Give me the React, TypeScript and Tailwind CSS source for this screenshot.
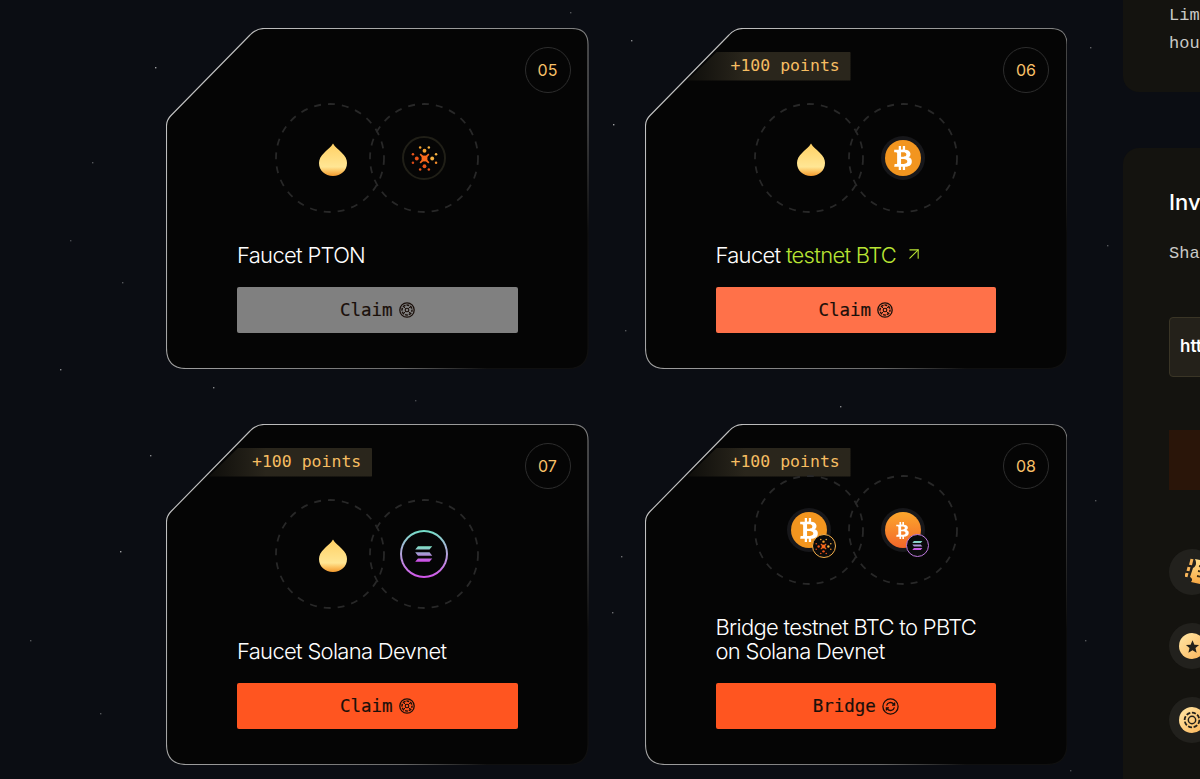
import { ArrowUpRight } from 'lucide-react'
import { FaBtc } from 'react-icons/fa'
import type { ReactNode } from 'react'

const mono = "font-['DejaVu_Sans_Mono',monospace]"
const plainMono = "font-['Liberation_Mono',monospace]"
const sans = "font-['Inter',sans-serif]"

// starfield dots: x, y, opacity
const stars = [
  [155, 67, 0.6], [631, 40, 0.5], [1090, 47, 0.35], [92, 162, 0.3], [613, 124, 0.6], [122, 282, 0.3],
  [60, 369, 0.5], [213, 387, 0.5], [840, 406, 0.5], [1107, 245, 0.3], [150, 455, 0.5], [120, 551, 0.6],
  [621, 556, 0.4], [100, 713, 0.3], [612, 612, 0.4], [30, 640, 0.3], [570, 12, 0.3], [1095, 500, 0.3],
  [70, 240, 0.25], [625, 330, 0.3], [1085, 640, 0.3], [415, 400, 0.25], [1070, 770, 0.25], [195, 128, 0.35],
  [193, 255, 0.3], [254, 581, 0.3], [428, 585, 0.3], [960, 200, 0.25], [1012, 192, 0.25], [565, 120, 0.3],
  [465, 355, 0.3], [884, 115, 0.25], [673, 130, 0.3], [905, 352, 0.25], [560, 550, 0.25], [800, 740, 0.2],
]

function Dot({ x, y, r, fill }: { x: number; y: number; r: number; fill: string }) {
  return <circle cx={x} cy={y} r={r} fill={fill} />
}

function Burst({ size }: { size: number }) {
  return (
    <svg width={size} height={size} viewBox="0 0 28 28">
      <rect x="11" y="11" width="6" height="6" fill="#ff6a1f" />
      <path d="M9.5 9.5l9 9M18.5 9.5l-9 9" stroke="#f96a1c" strokeWidth="1.7" />
      <Dot x={14} y={6} r={2} fill="#f5a12f" />
      <Dot x={14} y={22} r={2} fill="#e9541a" />
      <Dot x={6} y={14} r={2} fill="#e9541a" />
      <Dot x={22} y={14} r={2} fill="#f5b040" />
      <Dot x={9.5} y={2.5} r={1.3} fill="#f5a12f" />
      <Dot x={18.5} y={2.5} r={1.3} fill="#f5b040" />
      <Dot x={9.5} y={25.5} r={1.3} fill="#e9541a" />
      <Dot x={18.5} y={25.5} r={1.3} fill="#e9541a" />
      <Dot x={2} y={9.5} r={1.3} fill="#e9541a" />
      <Dot x={26} y={9.5} r={1.3} fill="#f5b040" />
      <Dot x={2} y={18.5} r={1.3} fill="#d94a18" />
      <Dot x={26} y={18.5} r={1.3} fill="#f08a2a" />
    </svg>
  )
}

function SolBars({ size, id }: { size: number; id: string }) {
  return (
    <svg width={size} height={size} viewBox="0 0 20 20">
      <defs>
        <linearGradient id={id} x1="0" y1="0" x2="0" y2="1">
          <stop offset="0" stopColor="#7fe3c4" />
          <stop offset="1" stopColor="#d04be8" />
        </linearGradient>
      </defs>
      <path d="M4.5 3h13l-2.5 3h-13zM2 8.5h13l2.5 3h-13zM4.5 14h13l-2.5 3h-13z" fill={`url(#${id})`} />
    </svg>
  )
}

function Drop() {
  return (
    <svg width="30" height="34" viewBox="0 0 30 34" className="ml-[5px] mt-[3px]">
      <defs>
        <linearGradient id="drop" x1="0" y1="0" x2="0" y2="1">
          <stop offset="0" stopColor="#ffd064" />
          <stop offset="0.72" stopColor="#ffe694" />
          <stop offset="0.84" stopColor="#fcc665" />
          <stop offset="1" stopColor="#f39a2e" />
        </linearGradient>
      </defs>
      <path d="M15 0.5 C17 4 20 6 23.5 9.5 C27.5 13 29 16.5 29 20 C29 27.5 23 33 15 33 C7 33 1 27.5 1 20 C1 16.5 2.5 13 6.5 9.5 C10 6 13 4 15 0.5Z" fill="url(#drop)" />
    </svg>
  )
}

function BtcCoin({ small, gradient }: { small?: boolean; gradient?: boolean }) {
  return (
    <div className="w-[44px] h-[44px] rounded-full bg-[#17171a] flex items-center justify-center">
      <div
        className={`w-[36px] h-[36px] rounded-full flex items-center justify-center ${gradient ? 'bg-gradient-to-b from-[#fba62c] to-[#f2662a]' : 'bg-[#f2951f]'}`}
      >
        <FaBtc className="text-white" size={small ? 17 : 24} />
      </div>
    </div>
  )
}

function ClaimIcon() {
  return (
    <svg width="16" height="16" viewBox="0 0 16 16" fill="none" stroke="#1a0f0a">
      <circle cx="8" cy="8" r="7.2" strokeWidth="1.3" />
      <circle cx="8" cy="8" r="5" strokeWidth="1.5" strokeDasharray="2.9 1" strokeDashoffset="1" />
      <circle cx="8" cy="8" r="1.8" strokeWidth="1.1" />
      <path d="M4.8 4.8l1.8 1.8M11.2 4.8l-1.8 1.8M4.8 11.2l1.8-1.8M11.2 11.2l-1.8-1.8" strokeWidth="1" />
    </svg>
  )
}

function BridgeIcon() {
  return (
    <svg width="17" height="17" viewBox="0 0 17 17" fill="none" stroke="#1a0f0a" strokeWidth="1.3">
      <circle cx="8.5" cy="8.5" r="7.6" />
      <path d="M4.6 7.6a4 4 0 0 1 7-1.6l.9 1M12.4 9.4a4 4 0 0 1-7 1.6l-.9-1" />
      <path d="M12.6 4.6v2.6H10M4.4 12.4V9.8H7" />
    </svg>
  )
}

function CardOutline({ id }: { id: string }) {
  const d =
    'M0.5 98 Q0.5 92 5 87.5 L84 7 Q90 0.5 98 0.5 H406 Q422 0.5 422 16.5 V320 Q422 340.5 402 340.5 H20 Q0.5 340.5 0.5 320 Z'
  return (
    <svg className="absolute inset-0" width="422.5" height="341" viewBox="0 0 422.5 341" fill="none">
      <defs>
        <linearGradient id={id} x1="0" y1="0" x2="1" y2="0.6">
          <stop offset="0" stopColor="#cfcfcf" />
          <stop offset="0.55" stopColor="#959595" />
          <stop offset="0.85" stopColor="#6b6b6b" />
          <stop offset="1" stopColor="#101010" />
        </linearGradient>
      </defs>
      <path d={d} fill="#050505" stroke={`url(#${id})`} strokeWidth="1.1" />
    </svg>
  )
}

function Rings({ children }: { children: ReactNode }) {
  return <div className="flex justify-center relative">{children}</div>
}

function Ring({ children, overlap }: { children: ReactNode; overlap?: boolean }) {
  return (
    <div className={`relative w-[110px] h-[110px] flex items-center justify-center ${overlap ? '-ml-[16px]' : ''}`}>
      <svg className="absolute inset-0" width="110" height="110" fill="none">
        <circle cx="55" cy="55" r="54" stroke="#282828" strokeWidth="1.8" strokeDasharray="7 7" />
      </svg>
      <div className="relative">{children}</div>
    </div>
  )
}

function Card({
  id,
  num,
  points,
  rings,
  title,
  button,
}: {
  id: string
  num: string
  points?: boolean
  rings: ReactNode
  title: ReactNode
  button: ReactNode
}) {
  return (
    <div className="relative w-[422.5px] h-[341px] flex flex-col items-center justify-end pb-[36px]">
      <CardOutline id={id} />
      {points && (
        <div
          className={`absolute left-[43px] top-[24px] w-[163px] h-[28.5px] pl-[43px] rounded-r-[1px] bg-gradient-to-r from-[#0f0e0b] to-[#2a261c] to-35% [clip-path:polygon(29px_0,100%_0,100%_100%,0_100%)] flex items-center text-[#f6bd62] text-[16.5px] whitespace-nowrap ${mono}`}
        >
          +100 points
        </div>
      )}
      <div
        className={`absolute top-[19px] right-[18px] w-[46px] h-[46px] rounded-full border border-[#2d2d2d] flex items-center justify-center text-[16px] text-[#f8c068] ${sans}`}
      >
        {num}
      </div>
      <div className="relative w-[280.5px] flex flex-col">
        <div className="-mx-[71px] mb-[30px]">
          <Rings>{rings}</Rings>
        </div>
        <div className={`text-[22px] leading-[24px] font-light tracking-[-0.7px] text-white mb-[20px] ${sans}`}>
          {title}
        </div>
        {button}
      </div>
    </div>
  )
}

function ActionButton({ label, color, icon }: { label: string; color: string; icon: ReactNode }) {
  return (
    <div
      className={`h-[46px] rounded-[2px] flex items-center justify-center gap-[6px] text-[17.5px] text-[#1a0f0a] [-webkit-text-stroke:0.2px_#1a0f0a] ${mono} ${color}`}
    >
      <span className="pt-[1px]">{label}</span>
      {icon}
    </div>
  )
}

function SideIcon({ children }: { children: ReactNode }) {
  return (
    <div className="w-[46px] h-[46px] rounded-full bg-[#22211d] flex items-center justify-center shrink-0">
      {children}
    </div>
  )
}

export default function App() {
  return (
    <div className="relative h-[779px] w-[1200px] overflow-hidden bg-[#0b0d13]">
      <svg className="absolute inset-0" width="1200" height="779">
        {stars.map(([x, y, o], i) => (
          <rect key={i} x={x} y={y} width="1.4" height="1.4" fill="#fff" opacity={o} />
        ))}
      </svg>

      <div className="relative flex pl-[166px] h-full">
        <div className="grid grid-cols-[422.5px_422.5px] gap-x-[56px] gap-y-[55px] pt-[28px] content-start shrink-0">
          <Card
            id="c5"
            num="05"
            rings={
              <>
                <Ring>
                  <Drop />
                </Ring>
                <Ring overlap>
                  <div className="w-[44px] h-[44px] rounded-full border-2 border-[#201f17] flex items-center justify-center">
                    <Burst size={27} />
                  </div>
                </Ring>
              </>
            }
            title="Faucet PTON"
            button={<ActionButton label="Claim" color="bg-[#808080]" icon={<ClaimIcon />} />}
          />
          <Card
            id="c6"
            num="06"
            points
            rings={
              <>
                <Ring>
                  <Drop />
                </Ring>
                <Ring overlap>
                  <BtcCoin />
                </Ring>
              </>
            }
            title={
              <span className="flex items-center">
                Faucet&nbsp;<span className="text-[#b9e434]">testnet BTC</span>
                <ArrowUpRight className="ml-[8px] -mt-[2px] text-[#b9e434]" size={20} strokeWidth={1.3} />
              </span>
            }
            button={<ActionButton label="Claim" color="bg-[#ff7149]" icon={<ClaimIcon />} />}
          />
          <Card
            id="c7"
            num="07"
            points
            rings={
              <>
                <Ring>
                  <Drop />
                </Ring>
                <Ring overlap>
                  <div className="w-[48px] h-[48px] rounded-full bg-gradient-to-b from-[#6fe0c8] to-[#d150ea] p-[2px]">
                    <div className="w-full h-full rounded-full bg-[#050506] flex items-center justify-center">
                      <SolBars size={22} id="sol-lg" />
                    </div>
                  </div>
                </Ring>
              </>
            }
            title="Faucet Solana Devnet"
            button={<ActionButton label="Claim" color="bg-[#ff5520]" icon={<ClaimIcon />} />}
          />
          <Card
            id="c8"
            num="08"
            points
            rings={
              <>
                <Ring>
                  <div className="relative">
                    <BtcCoin />
                    <div className="absolute left-[25px] top-[26px] w-[24px] h-[24px] rounded-full border border-[#f6b04a] bg-[#0a0a0b] flex items-center justify-center">
                      <Burst size={17} />
                    </div>
                  </div>
                </Ring>
                <Ring overlap>
                  <div className="relative">
                    <BtcCoin small gradient />
                    <div className="absolute left-[25px] top-[26px] w-[23px] h-[23px] rounded-full border border-[#c07be0] bg-[#0a0a0b] flex items-center justify-center">
                      <SolBars size={13} id="sol-sm" />
                    </div>
                  </div>
                </Ring>
              </>
            }
            title={
              <>
                Bridge testnet BTC to PBTC
                <br />
                on Solana Devnet
              </>
            }
            button={<ActionButton label="Bridge" color="bg-[#ff5520]" icon={<BridgeIcon />} />}
          />
        </div>

        <div className="ml-[56px] w-[400px] shrink-0 flex flex-col gap-[56px] h-full">
          <div
            className={`h-[92px] rounded-b-[16px] bg-[#14130f] pl-[46px] text-[17px] leading-[28px] text-[#c9c9c6] whitespace-nowrap ${plainMono}`}
          >
            <div className="pt-[2px]">Limit</div>
            <div>hours</div>
          </div>
          <div className="flex-1 rounded-t-[16px] bg-[#14130f] pl-[46px] pt-[40px]">
            <div className={`text-[22px] leading-[28px] font-medium text-white ${sans}`}>Invite</div>
            <div className={`mt-[26px] text-[17px] leading-[24px] text-[#c9c9c6] ${plainMono}`}>Share</div>
            <div
              className={`mt-[51px] h-[60px] rounded-[4px] border border-[#3a3526] bg-[#24211a] pl-[10px] flex items-center text-[17px] font-semibold text-white ${sans}`}
            >
              https://
            </div>
            <div className="mt-[53px] h-[60px] bg-[#2a1509]" />
            <div className="mt-[59px] flex flex-col gap-[28px]">
              <SideIcon>
                <svg width="30" height="30" viewBox="0 0 30 30" className="ml-[16px]">
                  <defs>
                    <linearGradient id="t" x1="0" y1="0" x2="0" y2="1">
                      <stop offset="0" stopColor="#ffdf8e" />
                      <stop offset="1" stopColor="#f8a33c" />
                    </linearGradient>
                  </defs>
                  <path d="M10 2l19 4-5 23-18-4c2-2 1-4-1-5l3-9c3-1 4-5 2-9z" fill="url(#t)" />
                  <path d="M7 2l-1.5 6M4 10l-1 4M2 16l-1 4" stroke="#f9b65a" strokeWidth="3" />
                  <path d="M14 9l9 2M13 14l9 2M12 19l9 2" stroke="#3a2c14" strokeWidth="1.8" />
                </svg>
              </SideIcon>
              <SideIcon>
                <div className="w-[26px] h-[26px] rounded-full bg-gradient-to-br from-[#ffe7a6] to-[#fbb456] flex items-center justify-center">
                  <svg width="15" height="15" viewBox="0 0 24 24" fill="#24211a">
                    <path d="M12 2l3 7 7.5 .6-5.7 4.900 1.800 7.300L12 18l-6.600 3.800 1.800-7.300L1.500 9.600 9 9z" />
                  </svg>
                </div>
              </SideIcon>
              <SideIcon>
                <div className="w-[26px] h-[26px] rounded-full bg-gradient-to-br from-[#ffe7a6] to-[#fbb456] flex items-center justify-center">
                  <svg width="18" height="18" viewBox="0 0 22 22" fill="none" stroke="#24211a">
                    <circle cx="11" cy="11" r="9" strokeWidth="2.2" strokeDasharray="5 2" />
                    <circle cx="11" cy="11" r="4.5" strokeWidth="1.8" />
                  </svg>
                </div>
              </SideIcon>
            </div>
          </div>
        </div>
      </div>
    </div>
  )
}
